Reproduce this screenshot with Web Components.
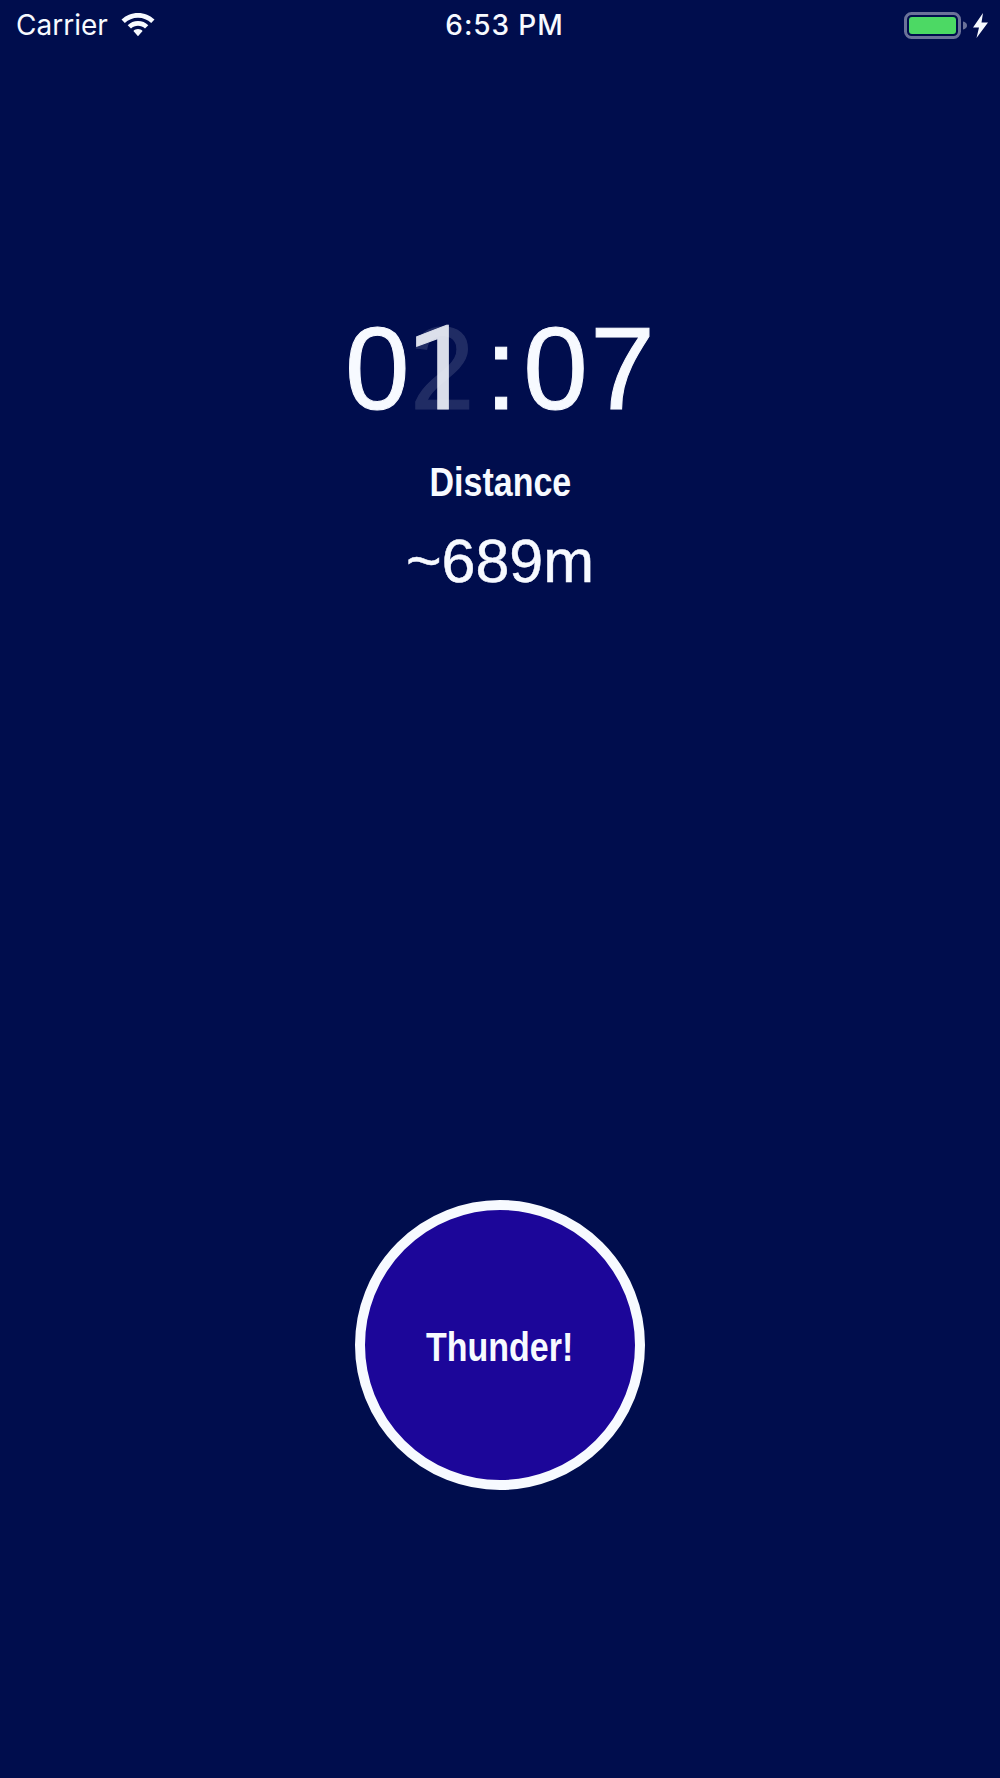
<!DOCTYPE html>
<html><head><meta charset="utf-8"><style>html,body{margin:0;padding:0;background:#000d4d}</style></head><body>
<run-screen></run-screen>
<script>
function def(name, html){customElements.define(name, class extends HTMLElement{constructor(){super();this.attachShadow({mode:'open'}).innerHTML=html}})}
def('status-bar',`<style>
:host{display:flex;justify-content:space-between;align-items:center;height:50px;position:relative;color:#f7faff;font-family:Inter,"Liberation Sans",sans-serif;padding:0 12px 0 16px;box-sizing:border-box}
.l,.r{display:flex;align-items:center}
.c{font-size:28px;line-height:50px}
.t{position:absolute;left:9px;right:0;text-align:center;font-size:28px;font-weight:500;line-height:50px;letter-spacing:.9px}
svg{display:block}
</style>
<div class="l"><span class="c">Carrier</span><svg style="margin-left:13px" width="34" height="24" viewBox="0 0 34 24"><path fill="#f7faff" d="M17 0C10.600 0 4.800 2.500.5 6.600L3.800 10C7.300 6.700 11.900 4.700 17 4.700S26.700 6.700 30.200 10L33.500 6.600C29.200 2.500 23.400 0 17 0ZM17 8C13 8 9.400 9.600 6.700 12.200L10 15.500C11.900 13.700 14.300 12.700 17 12.700S22.100 13.700 24 15.500L27.300 12.200C24.600 9.600 21 8 17 8ZM17 16C15.200 16 13.600 16.700 12.400 17.900L17 23.200 21.600 17.900C20.400 16.700 18.800 16 17 16Z"/></svg></div>
<div class="t">6:53 PM</div>
<div class="r"><svg width="84" height="27" viewBox="0 0 84 27"><rect x="1.500" y="1.500" width="54" height="24" rx="6" fill="none" stroke="#6b7299" stroke-width="3"/><rect x="5" y="5" width="47" height="17" rx="3" fill="#4cd964"/><path d="M59 9.500c2.500.6 4 2 4 4s-1.500 3.400-4 4z" fill="#6b7299"/><path fill="#f7faff" d="M79 1 69 15.500h6L72.500 26 84 10.500h-6.500Z"/></svg></div>`);
def('run-timer',`<style>
:host{display:block;font-family:"Liberation Sans",Arial,sans-serif;font-size:116px;line-height:138px;color:#f7faff;white-space:nowrap;font-weight:400;-webkit-text-stroke:1px #f7faff}
.n{display:flex;justify-content:center}
.x{display:block;width:67px;text-align:center}
.d{position:relative;display:block;width:67px}
.one{font-family:Roboto,sans-serif;display:block;margin-left:-4px;opacity:.88}
.g{position:absolute;left:-1px;top:0;opacity:.13}
.col{margin:0 5px 0 7px}
</style><div class="n"><span class="x">0</span><span class="d"><span class="one">1</span><span class="g">2</span></span><span class="col">:</span><span class="x">0</span><span class="x">7</span></div>`);
def('cond-text',`<style>
:host{display:inline-block;transform:scaleX(.85);transform-origin:center;font-family:"Liberation Sans",sans-serif;font-weight:700;font-size:40px;white-space:nowrap}
</style><slot></slot>`);
def('stat-block',`<style>
:host{display:block;text-align:center;color:#f7faff;font-family:"Liberation Sans",Arial,sans-serif}
.k{line-height:46px}
.v{font-size:61px;line-height:70px;margin-top:12px;-webkit-text-stroke:.5px #f7faff}
</style><div class="k"><cond-text><slot name="k"></slot></cond-text></div><div class="v"><slot name="v"></slot></div>`);
def('thunder-button',`<style>
:host{display:flex;align-items:center;justify-content:center;width:290px;height:290px;box-sizing:border-box;border:10px solid #f7faff;border-radius:50%;background:#1c0699;color:#f7faff;padding-top:4px}
</style><cond-text><slot></slot></cond-text>`);
def('run-screen',`<style>
:host{display:flex;flex-direction:column;align-items:center;width:1000px;height:1778px;background:#000d4d;overflow:hidden}
status-bar{align-self:stretch}
run-timer{margin-top:250px}
stat-block{margin-top:21px}
thunder-button{margin-top:604px}
</style>
<status-bar></status-bar>
<run-timer></run-timer>
<stat-block><span slot="k">Distance</span><span slot="v">~689m</span></stat-block>
<thunder-button>Thunder!</thunder-button>`);
</script>
</body></html>
